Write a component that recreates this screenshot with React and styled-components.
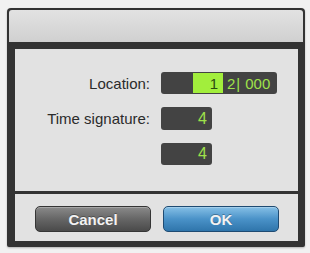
import React from "react";
import styled, { createGlobalStyle } from "styled-components";

const Global = createGlobalStyle`
  html, body { margin: 0; padding: 0; background: #f1f1f1; }
  body { font-family: "Liberation Sans", Arial, sans-serif; }
`;

const Page = styled.div`
  width: 310px;
  height: 253px;
  padding: 8px 0 0 7px;
  box-sizing: border-box;
`;

const Window = styled.div`
  width: 298px;
  height: 239px;
  background: #333;
  border-radius: 4px 4px 2px 2px;
  display: flex;
  flex-direction: column;
  box-shadow: 0 1px 2px rgba(0,0,0,0.25);
`;

const TitleBar = styled.div`
  height: 32px;
  margin: 2px 2px 0 2px;
  border-radius: 3px 3px 0 0;
  background: linear-gradient(#e2e2e2, #d0d0d0);
`;

const Body = styled.div`
  margin: 7px 7px 6px 8px;
  display: flex;
  flex-direction: column;
  gap: 3px;
`;

const Panel = styled.div`
  height: 142px;
  background: #e2e2e2;
  box-sizing: border-box;
  padding-top: 23px;
  display: grid;
  grid-template-columns: 135px auto;
  column-gap: 11px;
  row-gap: 13px;
  align-items: center;
  align-content: start;
`;

const Label = styled.div`
  text-align: right;
  font-size: 15px;
  color: #2b2b2b;
`;

const Field = styled.div`
  width: ${(p) => p.$w}px;
  height: ${(p) => p.$h}px;
  box-sizing: border-box;
  background: #434343;
  border-radius: 3px;
  padding: 1px 5px 1px 1px;
  display: flex;
  align-items: center;
  justify-content: flex-end;
  color: #9fe24a;
  font-size: 16px;
  line-height: 1;
`;

const LocationField = styled(Field)`
  justify-content: flex-start;
  padding-left: 32px;
`;

const Highlight = styled.div`
  width: 30px;
  height: 100%;
  background: #a2ee3c;
  color: #2c4a10;
  display: flex;
  align-items: center;
  justify-content: flex-end;
  padding-right: 5px;
  box-sizing: border-box;
  font-size: 15px;
`;

const Segment = styled.span`
  font-size: 15px;
  margin-left: ${(p) => p.$ml || 0}px;
`;

const ButtonArea = styled.div`
  height: 47px;
  background: #e2e2e2;
  box-sizing: border-box;
  padding: 12px 0 0 20px;
  display: flex;
  gap: 12px;
`;

const Button = styled.div`
  width: 116px;
  height: 26px;
  box-sizing: border-box;
  border-radius: 5px;
  border: 1px solid ${(p) => (p.$primary ? "#1f4b72" : "#353535")};
  background: ${(p) =>
    p.$primary
      ? "linear-gradient(#86c0e6, #4a92c8 50%, #2f75ab)"
      : "linear-gradient(#8a8a8a, #666 50%, #4a4a4a)"};
  box-shadow: inset 0 1px 0 rgba(255,255,255,0.25);
  color: #f2f2f2;
  font-weight: bold;
  font-size: 15px;
  display: flex;
  align-items: center;
  justify-content: center;
  text-shadow: 0 -1px 0 rgba(0,0,0,0.3);
`;

export default function App() {
  return (
    <Page>
      <Global />
      <Window>
        <TitleBar />
        <Body>
          <Panel>
            <Label>Location:</Label>
            <LocationField $w={116} $h={22}>
              <Highlight>1</Highlight>
              <Segment $ml={4}>2</Segment>
              <Segment $ml={1}>|</Segment>
              <Segment $ml={5}>000</Segment>
            </LocationField>
            <Label>Time signature:</Label>
            <Field $w={51} $h={23}>4</Field>
            <Label />
            <Field $w={51} $h={22}>4</Field>
          </Panel>
          <ButtonArea>
            <Button>Cancel</Button>
            <Button $primary>OK</Button>
          </ButtonArea>
        </Body>
      </Window>
    </Page>
  );
}
